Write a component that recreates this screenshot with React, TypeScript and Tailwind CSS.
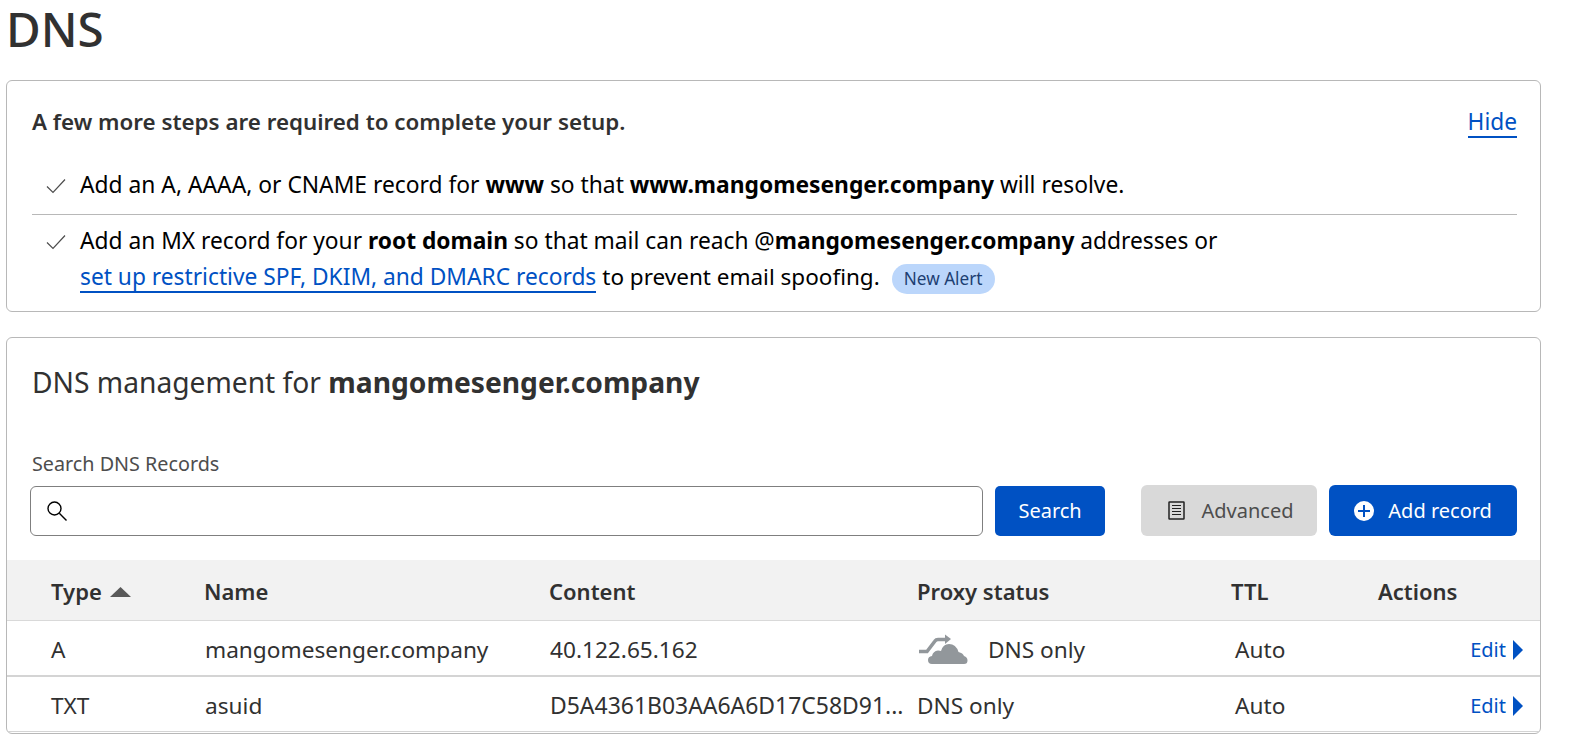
const font = "font-['Noto_Sans',sans-serif]"
const cols = 'grid grid-cols-[153px_345px_368px_314px_147px_1fr]'

function Check() {
  return (
    <svg viewBox="0 0 20 16" className="mt-[11px] h-[16px] w-[20px] shrink-0 text-[#4d4d4d]" fill="none" stroke="currentColor" strokeWidth="1.2">
      <path d="M1 8.5 L7 14.5 L19 1.5" />
    </svg>
  )
}

function CloudIcon() {
  return (
    <svg viewBox="0 0 50 31" className="h-[31px] w-[50px] shrink-0" fill="#92979b">
      <path d="M1 17.500 H9 L17 7 Q18 5.500 20 5.500 H28" fill="none" stroke="#92979b" strokeWidth="3.500" />
      <path d="M27 0.500 L33 5 L27 10 Z" />
      <path d="M14 30 Q10 30 10 26 Q10 22.500 14 22 Q15 17 20 16.500 Q22 16.500 23 17 Q25 10 31 10 Q38 10 40.500 18 Q45 19 46 22 Q49.500 23 49.500 26.500 Q49.500 30 46 30 Z" />
    </svg>
  )
}

function EditLink() {
  return (
    <span className="flex items-center justify-end gap-[7px] pr-[17px] text-[20px] text-[#0051c3]">
      Edit
      <svg viewBox="0 0 10 20" className="h-[20px] w-[10px]" fill="#0051c3">
        <path d="M0 0 L10 10 L0 20 Z" />
      </svg>
    </span>
  )
}

export default function App() {
  return (
    <div className={`${font} h-[749px] bg-white px-[6px] text-[#313131]`}>
      <div className="w-[1535px]">
        <h1 className="h-[80px] text-[47.500px] leading-[58px] font-medium">DNS</h1>

        {/* Setup steps */}
        <section className="h-[232px] rounded-[6px] border border-[#b8b8b8] pt-[23px] pr-[23px] pl-[25px]">
          <div className="flex items-center justify-between">
            <p className="text-[22.350px] leading-[36px] font-semibold">A few more steps are required to complete your setup.</p>
            <a className="border-b-2 border-[#0051c3] text-[22.700px] leading-[29px] text-[#0051c3]">Hide</a>
          </div>
          <div className="mt-[18px] flex h-[57px] gap-[14px] border-b border-[#b8b8b8] pt-[9px] pl-[14px] text-[22.800px] leading-[36px] text-black">
            <Check />
            <p>
              Add an A, AAAA, or CNAME record for <b>www</b> so that <b>www.mangomesenger.company</b> will resolve.
            </p>
          </div>
          <div className="flex gap-[14px] pt-[8px] pl-[14px] text-[22.750px] leading-[36px] text-black">
            <Check />
            <div>
              <p>
                Add an MX record for your <b>root domain</b> so that mail can reach @<b>mangomesenger.company</b> addresses or
              </p>
              <p className="flex items-center">
                <a className="border-b-2 border-[#0051c3] leading-[29px] text-[#0051c3]">set up restrictive SPF, DKIM, and DMARC records</a>
                <span className="ml-[6px] text-[22.500px]">to prevent email spoofing.</span>
                <span className="mt-[3px] ml-[12px] rounded-full bg-[#bbd6fb] px-[12px] text-[17.200px] leading-[30px] text-[#1d3f72]">New Alert</span>
              </p>
            </div>
          </div>
        </section>

        {/* Records */}
        <section className="mt-[25px] h-[397px] rounded-[6px] border border-[#b8b8b8]">
          <h2 className="px-[25px] pt-[22px] text-[28.200px] leading-[44px]">
            DNS management for <b className="font-bold">mangomesenger.company</b>
          </h2>

          <div className="mt-[47px] px-[25px] text-[19.750px] leading-[26px] text-[#4d4d4d]">Search DNS Records</div>
          <div className="mt-[8px] flex items-center pr-[23px] pl-[23px]">
            <div className="flex h-[50px] w-[954px] items-center rounded-[6px] border border-[#7f7f7f] pl-[16px]">
              <svg viewBox="0 0 20 20" className="h-[20px] w-[20px]" fill="none" stroke="#000" strokeWidth="1.400">
                <circle cx="7.500" cy="7.500" r="6.500" />
                <path d="M12.300 12.300 L19.500 19.500" />
              </svg>
            </div>
            <button className="ml-[12px] h-[50px] w-[111px] rounded-[5px] bg-[#0051c3] text-[20px] text-white">Search</button>
            <button className="ml-[36px] flex h-[51px] w-[176px] items-center gap-[16px] rounded-[6px] bg-[#d9d9d9] pl-[27px] text-[20px] text-[#4d4d4d]">
              <svg viewBox="0 0 17 19" className="h-[19px] w-[17px]" fill="none" stroke="#222" strokeWidth="1.500">
                <rect x="1" y="1" width="15" height="17" rx="0.500" />
                <path d="M4 4.500 H13 M4 7.500 H13 M4 10.500 H13 M4 13.500 H13" strokeWidth="1.200" />
              </svg>
              Advanced
            </button>
            <button className="ml-[12px] flex h-[51px] w-[188px] items-center justify-center gap-[14px] rounded-[6px] bg-[#0051c3] text-[20px] text-white">
              <svg viewBox="0 0 20 20" className="h-[20px] w-[20px]">
                <circle cx="10" cy="10" r="10" fill="white" />
                <path d="M10 4 V16 M4 10 H16" stroke="#0051c3" strokeWidth="2" />
              </svg>
              Add record
            </button>
          </div>

          <div className="mt-[24px]">
            <div className={`${cols} h-[61px] items-center border-b border-[#d9d9d9] bg-[#f2f2f2] pt-[3px] pl-[44px] text-[22px] font-semibold`}>
              <span className="flex items-center gap-[8px]">
                Type
                <svg viewBox="0 0 21 10" className="h-[10px] w-[21px]" fill="#595959">
                  <path d="M10.500 0 L21 10 H0 Z" />
                </svg>
              </span>
              <span>Name</span>
              <span>Content</span>
              <span>Proxy status</span>
              <span>TTL</span>
              <span>Actions</span>
            </div>

            <div className={`${cols} h-[56px] items-center border-b-[2px] border-[#d4d4d4] pt-[4px] pl-[44px] text-[22.650px]`}>
              <span>A</span>
              <span className="pl-[1px]">mangomesenger.company</span>
              <span className="pl-[1px]">40.122.65.162</span>
              <span className="flex items-center gap-[20px] pl-[1px]">
                <CloudIcon />
                DNS only
              </span>
              <span className="pl-[4px]">Auto</span>
              <EditLink />
            </div>

            <div className={`${cols} h-[55px] items-center border-b border-[#d4d4d4] pt-[3px] pl-[44px] text-[22.650px]`}>
              <span>TXT</span>
              <span className="pl-[1px]">asuid</span>
              <span className="whitespace-nowrap pl-[1px] text-[22.950px]">D5A4361B03AA6A6D17C58D91...</span>
              <span>DNS only</span>
              <span className="pl-[4px]">Auto</span>
              <EditLink />
            </div>
          </div>
        </section>
      </div>
    </div>
  )
}
